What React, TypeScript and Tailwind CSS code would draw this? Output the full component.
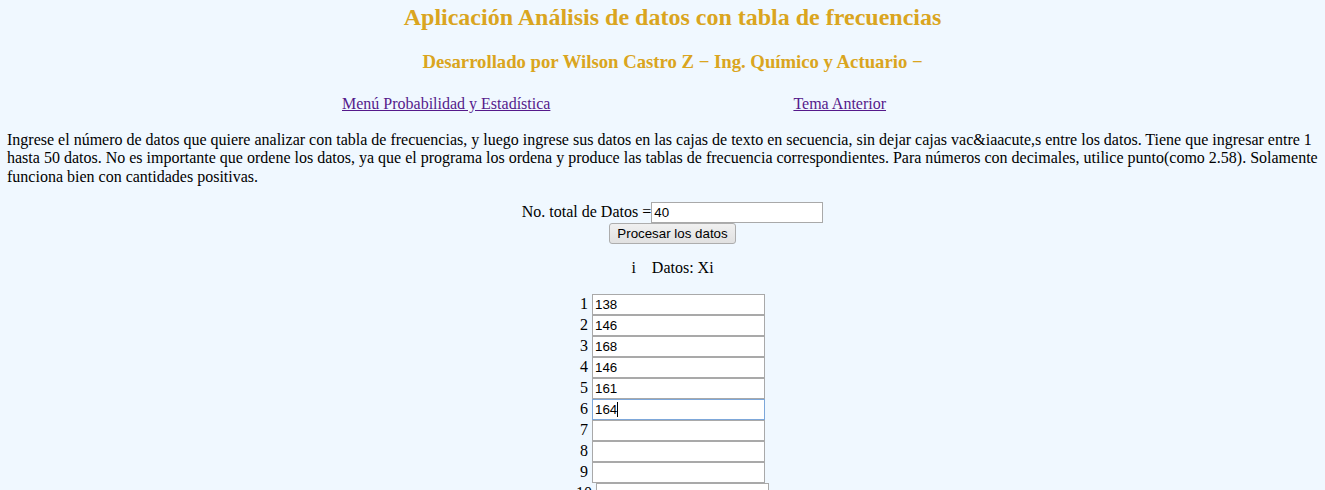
import React from "react";

const values: string[] = ["138", "146", "168", "146", "161", "164"];

export default function App() {
  const rows = Array.from({ length: 40 }, (_, i) => i + 1);
  return (
    <div className="h-[490px] w-full overflow-hidden bg-[#f0f8ff] font-['Liberation_Serif',serif] text-[16px] text-black">
      <div className="ml-[7px] w-[1331px]">
        <h2 className="mt-[3px] text-center text-[24px] font-bold leading-[28px] text-[#daa520]">
          Aplicación Análisis de datos con tabla de frecuencias
        </h2>
        <h3 className="mt-[20px] text-center text-[18.72px] font-bold leading-[22px] text-[#daa520]">
          Desarrollado por Wilson Castro Z − Ing. Químico y Actuario −
        </h3>
        <div className="mt-[22px] flex leading-[18px]">
          <a href="#" className="ml-[335px] text-[#551a8b] underline">
            Menú Probabilidad y Estadística
          </a>
          <a href="#" className="ml-[243px] text-[#551a8b] underline">
            Tema Anterior
          </a>
        </div>
        <p className="mt-[18px] leading-[18.4px]">
          Ingrese el número de datos que quiere analizar con tabla de frecuencias, y luego ingrese sus datos en las cajas de texto en secuencia, sin dejar cajas vac&amp;iaacute,s entre los datos. Tiene que ingresar entre 1 hasta 50 datos. No es importante que ordene los datos, ya que el programa los ordena y produce las tablas de frecuencia correspondientes. Para números con decimales, utilice punto(como 2.58). Solamente funciona bien con cantidades positivas.
        </p>
        <div className="mt-[16px] flex items-baseline justify-center leading-[18.4px]">
          <span>No. total de Datos =</span>
          <input
            type="text"
            defaultValue="40"
            className="h-[21px] w-[172px] border border-[#a9a9a9] bg-white px-[2px] py-[1px] font-['Liberation_Sans',Arial,sans-serif] text-[13.333px] text-black outline-none"
          />
        </div>
        <div className="flex justify-center">
          <button className="h-[21px] w-[127px] rounded-[3px] border border-[#adadad] bg-gradient-to-b from-[#f0f0f0] to-[#e1e1e1] font-['Liberation_Sans',Arial,sans-serif] text-[13.333px] leading-[18px] text-black">
            Procesar los datos
          </button>
        </div>
        <div className="mt-[15px] whitespace-pre text-center leading-[18.4px]">
          {"i    Datos: Xi"}
        </div>
        <div className="mt-[16px] flex flex-col">
          {rows.map((n) => (
            <div key={n} className="flex h-[21px] items-baseline justify-center leading-[18.4px]">
              <span className="mr-[4px]">{n}</span>
              <div className="relative">
                <input
                  type="text"
                  defaultValue={values[n - 1] ?? ""}
                  className={
                    n === 6
                      ? "h-[21px] w-[173px] border border-[#7da7d9] bg-white px-[2px] py-[1px] font-['Liberation_Sans',Arial,sans-serif] text-[13.333px] text-black outline-none"
                      : "h-[21px] w-[173px] border border-[#a9a9a9] bg-white px-[2px] py-[1px] font-['Liberation_Sans',Arial,sans-serif] text-[13.333px] text-black outline-none"
                  }
                />
                {n === 6 && (
                  <span className="absolute left-[25px] top-[3px] h-[15px] w-[1px] bg-black" />
                )}
              </div>
            </div>
          ))}
        </div>
      </div>
    </div>
  );
}
